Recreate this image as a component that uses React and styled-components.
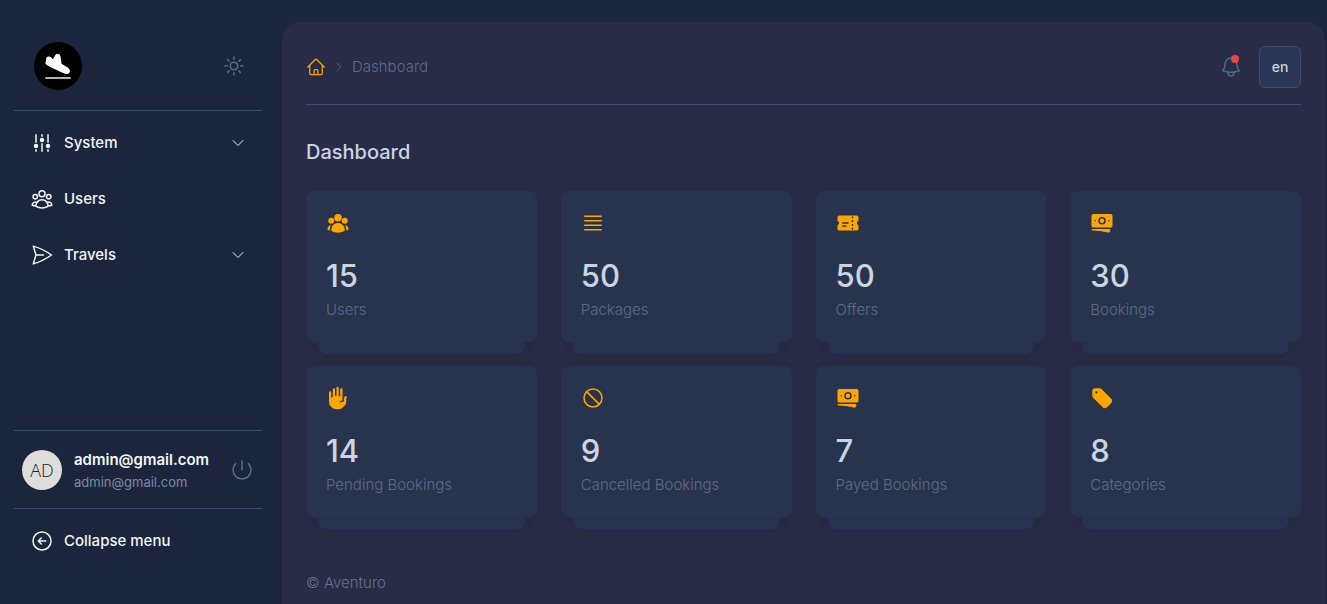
import React from "react";
import styled, { createGlobalStyle, css } from "styled-components";
import {
  HiAdjustmentsVertical,
  HiBanknotes,
  HiHandRaised,
  HiOutlineArrowLeftCircle,
  HiOutlineBars4,
  HiOutlineBell,
  HiOutlineChevronDown,
  HiOutlineChevronRight,
  HiOutlineHome,
  HiOutlineNoSymbol,
  HiOutlinePaperAirplane,
  HiOutlinePower,
  HiOutlineSun,
  HiOutlineUserGroup,
  HiTag,
  HiTicket,
  HiUserGroup,
} from "react-icons/hi2";

const color = {
  page: "#1b253b",
  panel: "#282c46",
  card: "#28344e",
  under: "#293453",
  line: "#3f4f73",
  text: "#cbd5e1",
  muted: "#5e6b87",
  accent: "#ffa500",
};

const GlobalStyle = createGlobalStyle`
  *, *::before, *::after { box-sizing: border-box; }
  body {
    margin: 0;
    background: ${color.page};
    color: ${color.text};
    font-family: Inter, "Liberation Sans", sans-serif;
    font-size: 15px;
    line-height: 20px;
  }
  svg { display: block; flex-shrink: 0; }
`;

const plainButton = css`
  border: 0;
  padding: 0;
  background: none;
  font: inherit;
  color: inherit;
  cursor: pointer;
`;

const Layout = styled.div`
  display: flex;
  min-height: 100vh;
  padding: 22px 2px 0 0;
`;

const Sidebar = styled.aside`
  display: flex;
  flex-direction: column;
  flex: 0 0 282px;
  height: calc(100vh - 22px);
  padding: 0 20px 41px 14px;
`;

const Brand = styled.div`
  display: flex;
  align-items: center;
  justify-content: space-between;
  height: 89px;
  padding: 0 16px 0 20px;
  border-bottom: 1px solid ${color.line};
`;

const IconButton = styled.button`
  ${plainButton}
  position: relative;
  color: ${(p) => p.$tone || color.muted};
`;

const Nav = styled.nav`
  display: flex;
  flex-direction: column;
  flex: 1;
  gap: 12px;
  padding-top: 10px;
`;

const itemStyle = css`
  display: flex;
  align-items: center;
  gap: 10px;
  width: 100%;
  height: 44px;
  padding: 0 16px;
  font-size: 15px;
  font-weight: 500;
  color: #f1f5f9;
  text-align: left;
  text-decoration: none;
`;

const NavButton = styled.button`
  ${plainButton}
  ${itemStyle}
`;

const NavLink = styled.a`
  ${itemStyle}
`;

const NavLabel = styled.span`
  flex: 1;
`;

const Account = styled.div`
  display: flex;
  align-items: center;
  gap: 12px;
  height: 79px;
  padding: 0 8px;
  margin-bottom: 10px;
  border: solid ${color.line};
  border-width: 1px 0;
`;

const Avatar = styled.div`
  display: grid;
  place-items: center;
  width: 40px;
  height: 40px;
  border-radius: 50%;
  background: #dddddd;
  color: #222222;
  font-family: "Open Sans", sans-serif;
  font-size: 18px;
  font-weight: 300;
`;

const Identity = styled.div`
  flex: 1;
  min-width: 0;
`;

const AccountName = styled.div`
  font-size: 15px;
  line-height: 24px;
  font-weight: 600;
  color: #f1f5f9;
`;

const AccountMail = styled.div`
  font-size: 13px;
  color: #7c8ba5;
`;

const Panel = styled.main`
  flex: 1;
  min-width: 0;
  padding: 24px 24px 0;
  border-radius: 18px 18px 0 0;
  background: ${color.panel};
`;

const TopBar = styled.header`
  display: flex;
  align-items: center;
  justify-content: space-between;
  padding-bottom: 16px;
  border-bottom: 1px solid ${color.line};
`;

const Breadcrumb = styled.nav`
  display: flex;
  align-items: center;
  gap: 7px;
  font-weight: 300;
  color: ${color.muted};
`;

const HomeLink = styled.a`
  color: ${color.accent};
`;

const Actions = styled.div`
  display: flex;
  align-items: center;
  gap: 16px;
`;

const AlertDot = styled.span`
  position: absolute;
  top: 0;
  right: 4px;
  width: 8px;
  height: 8px;
  border-radius: 50%;
  background: #ef4444;
`;

const LanguageButton = styled.button`
  ${plainButton}
  width: 42px;
  height: 42px;
  border: 1px solid ${color.line};
  border-radius: 6px;
  background: #293553;
  font-size: 14px;
  font-weight: 500;
`;

const Title = styled.h1`
  margin: 32px 0 23px;
  font-size: 20px;
  line-height: 31px;
  font-weight: 500;
`;

const Grid = styled.section`
  display: grid;
  grid-template-columns: repeat(4, 1fr);
  gap: 24px;
`;

const Card = styled.article`
  position: relative;
  z-index: 0;

  &::after {
    content: "";
    position: absolute;
    z-index: -1;
    inset: 12px 12px -12px;
    border-radius: 8px;
    background: ${color.under};
    box-shadow: 0 3px 12px rgba(0, 0, 0, 0.06);
  }
`;

const CardBody = styled.div`
  padding: 20px 20px 22px;
  border-radius: 8px;
  background: ${color.card};
  box-shadow: 0 3px 12px rgba(0, 0, 0, 0.08);
  color: ${color.accent};
`;

const Figure = styled.div`
  margin-top: 24px;
  font-size: 31px;
  line-height: 34px;
  font-weight: 500;
  color: ${color.text};
`;

const Caption = styled.div`
  margin-top: 6px;
  line-height: 21px;
  font-weight: 300;
  color: ${color.muted};
`;

const Footer = styled.footer`
  padding: 56px 0 11px;
  font-weight: 300;
  color: #64748b;
`;

const Logo = () => (
  <svg width="48" height="48" viewBox="0 0 48 48" role="img" aria-label="Aventuro">
    <circle cx="24" cy="24" r="24" fill="#000" />
    <path
      d="M12.4 15.8Q14 13.6 16.4 14.8L19 17.2L21.4 13Q23.2 10.9 25.4 12.3Q26.9 13.8 27 17.5L27.5 21.8L33.8 25.6Q36.8 28 35.6 30.6Q34.2 32.8 31 31.8Q26 29.8 20 26.8Q15 24.4 12.2 22.4Q10.6 21.2 11.8 19.7Z"
      fill="#fff"
    />
    <path d="M11.3 36H36.7" stroke="#b9adb5" strokeWidth="2" />
  </svg>
);

const stats = [
  { icon: HiUserGroup, value: 15, label: "Users" },
  { icon: HiOutlineBars4, value: 50, label: "Packages" },
  { icon: HiTicket, value: 50, label: "Offers" },
  { icon: HiBanknotes, value: 30, label: "Bookings" },
  { icon: HiHandRaised, value: 14, label: "Pending Bookings" },
  { icon: HiOutlineNoSymbol, value: 9, label: "Cancelled Bookings" },
  { icon: HiBanknotes, value: 7, label: "Payed Bookings" },
  { icon: HiTag, value: 8, label: "Categories" },
];

const StatCard = ({ icon: Icon, value, label }) => (
  <Card>
    <CardBody>
      <Icon size={24} />
      <Figure>{value}</Figure>
      <Caption>{label}</Caption>
    </CardBody>
  </Card>
);

const NavGroup = ({ icon: Icon, label }) => (
  <NavButton type="button" aria-expanded="false">
    <Icon size={24} />
    <NavLabel>{label}</NavLabel>
    <HiOutlineChevronDown size={16} />
  </NavButton>
);

export default function App() {
  return (
    <>
      <GlobalStyle />
      <Layout>
        <Sidebar>
          <Brand>
            <Logo />
            <IconButton type="button" aria-label="Toggle theme">
              <HiOutlineSun size={24} />
            </IconButton>
          </Brand>
          <Nav aria-label="Main">
            <NavGroup icon={HiAdjustmentsVertical} label="System" />
            <NavLink href="#users">
              <HiOutlineUserGroup size={24} />
              <NavLabel>Users</NavLabel>
            </NavLink>
            <NavGroup icon={HiOutlinePaperAirplane} label="Travels" />
          </Nav>
          <Account>
            <Avatar>AD</Avatar>
            <Identity>
              <AccountName>admin@gmail.com</AccountName>
              <AccountMail>admin@gmail.com</AccountMail>
            </Identity>
            <IconButton type="button" aria-label="Log out">
              <HiOutlinePower size={24} />
            </IconButton>
          </Account>
          <NavButton type="button">
            <HiOutlineArrowLeftCircle size={24} />
            <NavLabel>Collapse menu</NavLabel>
          </NavButton>
        </Sidebar>
        <Panel>
          <TopBar>
            <Breadcrumb aria-label="Breadcrumb">
              <HomeLink href="#home" aria-label="Home">
                <HiOutlineHome size={20} />
              </HomeLink>
              <HiOutlineChevronRight size={12} />
              <span>Dashboard</span>
            </Breadcrumb>
            <Actions>
              <IconButton type="button" aria-label="Notifications" $tone="#56688a">
                <HiOutlineBell size={24} />
                <AlertDot />
              </IconButton>
              <LanguageButton type="button">en</LanguageButton>
            </Actions>
          </TopBar>
          <Title>Dashboard</Title>
          <Grid>
            {stats.map((stat) => (
              <StatCard key={stat.label} {...stat} />
            ))}
          </Grid>
          <Footer>© Aventuro</Footer>
        </Panel>
      </Layout>
    </>
  );
}
